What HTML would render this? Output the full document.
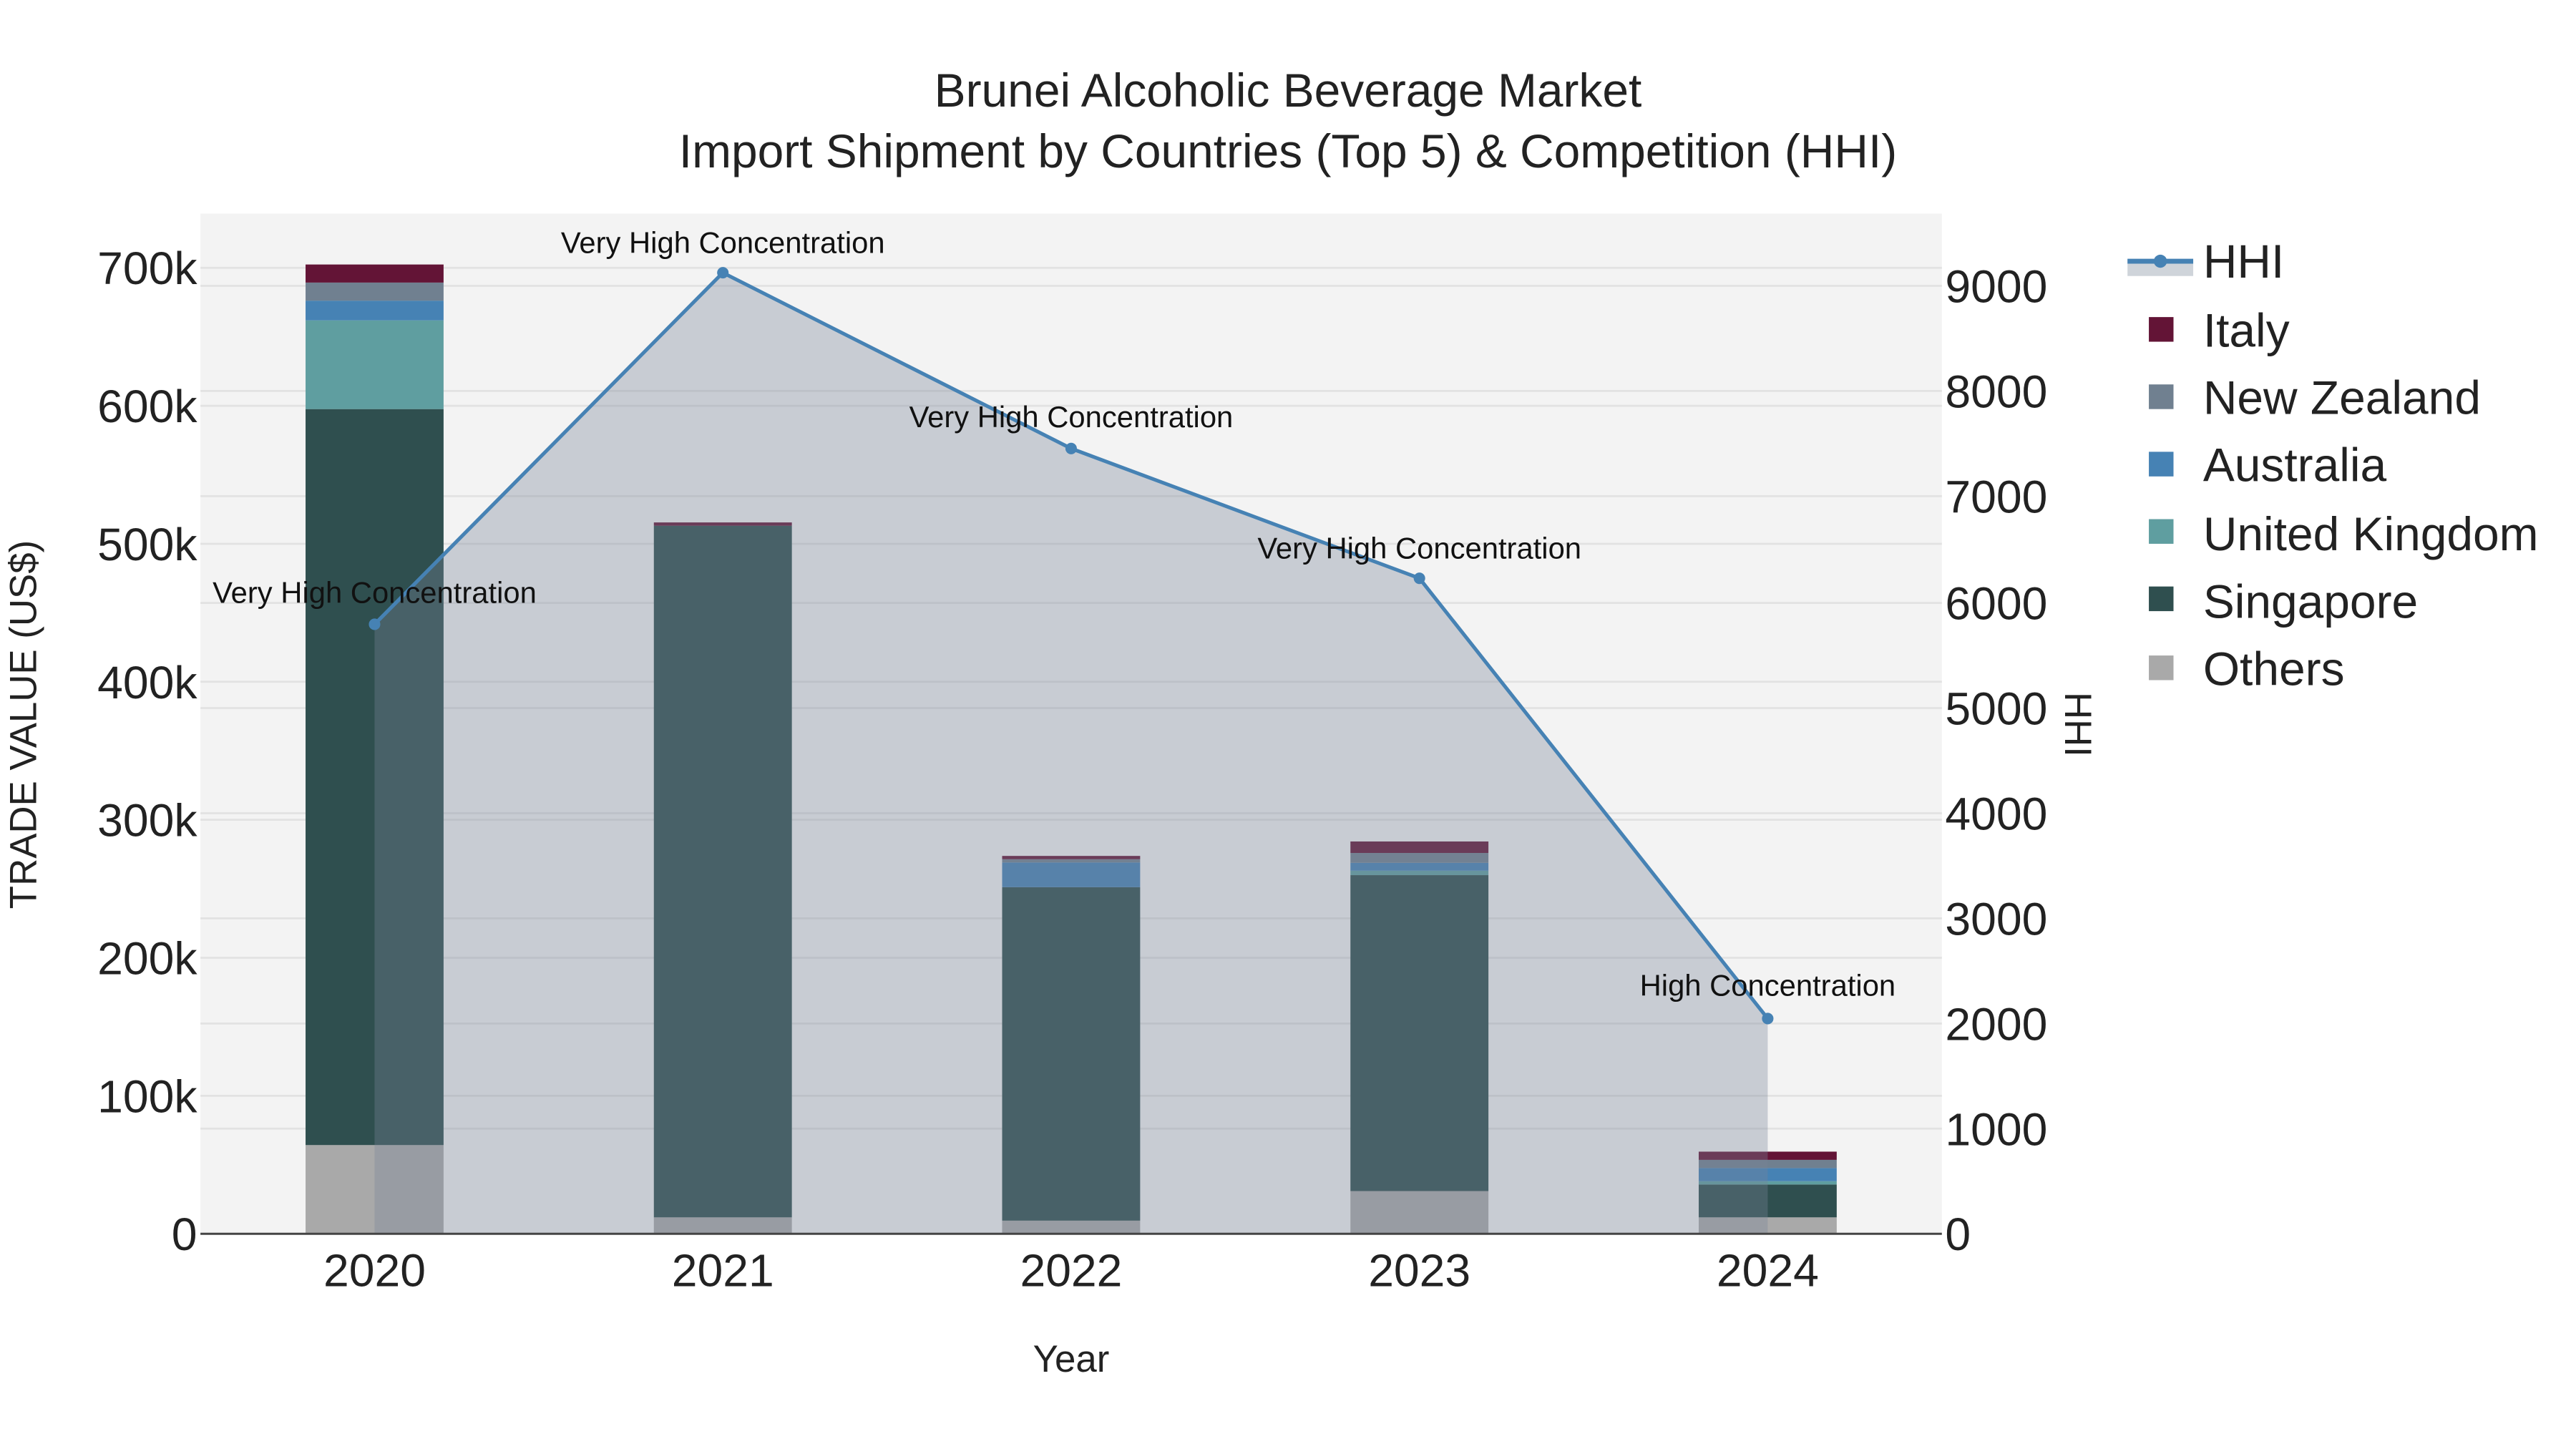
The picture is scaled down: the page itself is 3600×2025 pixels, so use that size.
<!DOCTYPE html>
<html><head><meta charset="utf-8"><style>
html,body{margin:0;padding:0;background:#fff;}
svg{display:block;font-family:"Liberation Sans",Arial,sans-serif;}
</style></head><body>
<svg width="3600" height="2025" viewBox="0 0 1568 882" xmlns="http://www.w3.org/2000/svg">
<rect width="1568" height="882" fill="#fff"/>
<rect x="122" y="130" width="1060" height="621" fill="#f3f3f3"/>
<g stroke="#e2e2e2" stroke-width="1.2">
<line x1="122" x2="1182" y1="667" y2="667"/><line x1="122" x2="1182" y1="583" y2="583"/>
<line x1="122" x2="1182" y1="499" y2="499"/><line x1="122" x2="1182" y1="415" y2="415"/>
<line x1="122" x2="1182" y1="331" y2="331"/><line x1="122" x2="1182" y1="247" y2="247"/>
<line x1="122" x2="1182" y1="163" y2="163"/>
<line x1="122" x2="1182" y1="687" y2="687"/><line x1="122" x2="1182" y1="623" y2="623"/>
<line x1="122" x2="1182" y1="559" y2="559"/><line x1="122" x2="1182" y1="495" y2="495"/>
<line x1="122" x2="1182" y1="431" y2="431"/><line x1="122" x2="1182" y1="367" y2="367"/>
<line x1="122" x2="1182" y1="302" y2="302"/><line x1="122" x2="1182" y1="238" y2="238"/>
<line x1="122" x2="1182" y1="174" y2="174"/>
</g>
<g>
<rect x="186" y="697" width="84" height="54" fill="#a9a9a9"/>
<rect x="186" y="249" width="84" height="448" fill="#2f4f4f"/>
<rect x="186" y="195" width="84" height="54" fill="#5f9ea0"/>
<rect x="186" y="183" width="84" height="12" fill="#4682b4"/>
<rect x="186" y="172" width="84" height="11" fill="#708090"/>
<rect x="186" y="161" width="84" height="11" fill="#631436"/>

<rect x="398" y="741" width="84" height="10" fill="#a9a9a9"/>
<rect x="398" y="320" width="84" height="421" fill="#2f4f4f"/>
<rect x="398" y="318" width="84" height="2" fill="#631436"/>

<rect x="610" y="743" width="84" height="8" fill="#a9a9a9"/>
<rect x="610" y="540" width="84" height="203" fill="#2f4f4f"/>
<rect x="610" y="525" width="84" height="15" fill="#4682b4"/>
<rect x="610" y="523" width="84" height="2" fill="#708090"/>
<rect x="610" y="521" width="84" height="2" fill="#631436"/>

<rect x="822" y="725" width="84" height="26" fill="#a9a9a9"/>
<rect x="822" y="532.7" width="84" height="192.3" fill="#2f4f4f"/>
<rect x="822" y="530" width="84" height="2.7" fill="#5f9ea0"/>
<rect x="822" y="525.2" width="84" height="4.8" fill="#4682b4"/>
<rect x="822" y="519.2" width="84" height="6" fill="#708090"/>
<rect x="822" y="512.2" width="84" height="7" fill="#631436"/>

<rect x="1034" y="741" width="84" height="10" fill="#a9a9a9"/>
<rect x="1034" y="721" width="84" height="20" fill="#2f4f4f"/>
<rect x="1034" y="719" width="84" height="2" fill="#5f9ea0"/>
<rect x="1034" y="711" width="84" height="8" fill="#4682b4"/>
<rect x="1034" y="706" width="84" height="5" fill="#708090"/>
<rect x="1034" y="701" width="84" height="5" fill="#631436"/>
</g>
<polygon points="228,751 228,380 440,166 652,273 864,352 1076,620 1076,751" fill="rgba(119,133,151,0.35)"/>
<polyline points="228,380 440,166 652,273 864,352 1076,620" fill="none" stroke="#4682b4" stroke-width="2.2"/>
<g fill="#4682b4"><circle cx="228" cy="380" r="3.5"/><circle cx="440" cy="166" r="3.5"/><circle cx="652" cy="273" r="3.5"/><circle cx="864" cy="352" r="3.5"/><circle cx="1076" cy="620" r="3.5"/></g>
<line x1="122" x2="1182" y1="751" y2="751" stroke="#444" stroke-width="1.3"/>
<g font-size="18.2" fill="#111" text-anchor="middle">
<text x="228" y="367">Very High Concentration</text>
<text x="440" y="154">Very High Concentration</text>
<text x="652" y="260">Very High Concentration</text>
<text x="864" y="340">Very High Concentration</text>
<text x="1076" y="606">High Concentration</text>
</g>
<g font-size="28.7" fill="#222" text-anchor="middle">
<text x="784" y="65">Brunei Alcoholic Beverage Market</text>
<text x="784" y="102">Import Shipment by Countries (Top 5) &amp; Competition (HHI)</text>
</g>
<g font-size="28" fill="#222" text-anchor="end">
<text x="120" y="761">0</text><text x="120" y="677">100k</text><text x="120" y="593">200k</text>
<text x="120" y="509">300k</text><text x="120" y="425">400k</text><text x="120" y="341">500k</text>
<text x="120" y="257">600k</text><text x="120" y="173">700k</text>
</g>
<g font-size="28" fill="#222" text-anchor="start">
<text x="1184" y="761">0</text><text x="1184" y="697">1000</text><text x="1184" y="633">2000</text>
<text x="1184" y="569">3000</text><text x="1184" y="505">4000</text><text x="1184" y="441">5000</text>
<text x="1184" y="377">6000</text><text x="1184" y="312">7000</text><text x="1184" y="248">8000</text>
<text x="1184" y="184">9000</text>
</g>
<g font-size="28" fill="#222" text-anchor="middle">
<text x="228" y="783">2020</text><text x="440" y="783">2021</text><text x="652" y="783">2022</text>
<text x="864" y="783">2023</text><text x="1076" y="783">2024</text>
</g>
<text x="652" y="835" font-size="23" fill="#222" text-anchor="middle">Year</text>
<text transform="translate(22,441) rotate(-90)" font-size="23" fill="#222" text-anchor="middle">TRADE VALUE (US$)</text>
<text transform="translate(1257,441) rotate(90)" font-size="23" fill="#222" text-anchor="middle">HHI</text>
<rect x="1295" y="158" width="40" height="10" fill="#cfd4da"/>
<line x1="1295" x2="1335" y1="159" y2="159" stroke="#4682b4" stroke-width="3"/>
<circle cx="1315" cy="159" r="4" fill="#4682b4"/>
<rect x="1308" y="193" width="15" height="15" fill="#631436"/>
<rect x="1308" y="234" width="15" height="15" fill="#708090"/>
<rect x="1308" y="275" width="15" height="15" fill="#4682b4"/>
<rect x="1308" y="316" width="15" height="15" fill="#5f9ea0"/>
<rect x="1308" y="357" width="15" height="15" fill="#2f4f4f"/>
<rect x="1308" y="399" width="15" height="15" fill="#a9a9a9"/>
<g font-size="28.7" fill="#222">
<text x="1341" y="169">HHI</text><text x="1341" y="211">Italy</text><text x="1341" y="252">New Zealand</text>
<text x="1341" y="293">Australia</text><text x="1341" y="335">United Kingdom</text>
<text x="1341" y="376">Singapore</text><text x="1341" y="417">Others</text>
</g>
</svg>
</body></html>
